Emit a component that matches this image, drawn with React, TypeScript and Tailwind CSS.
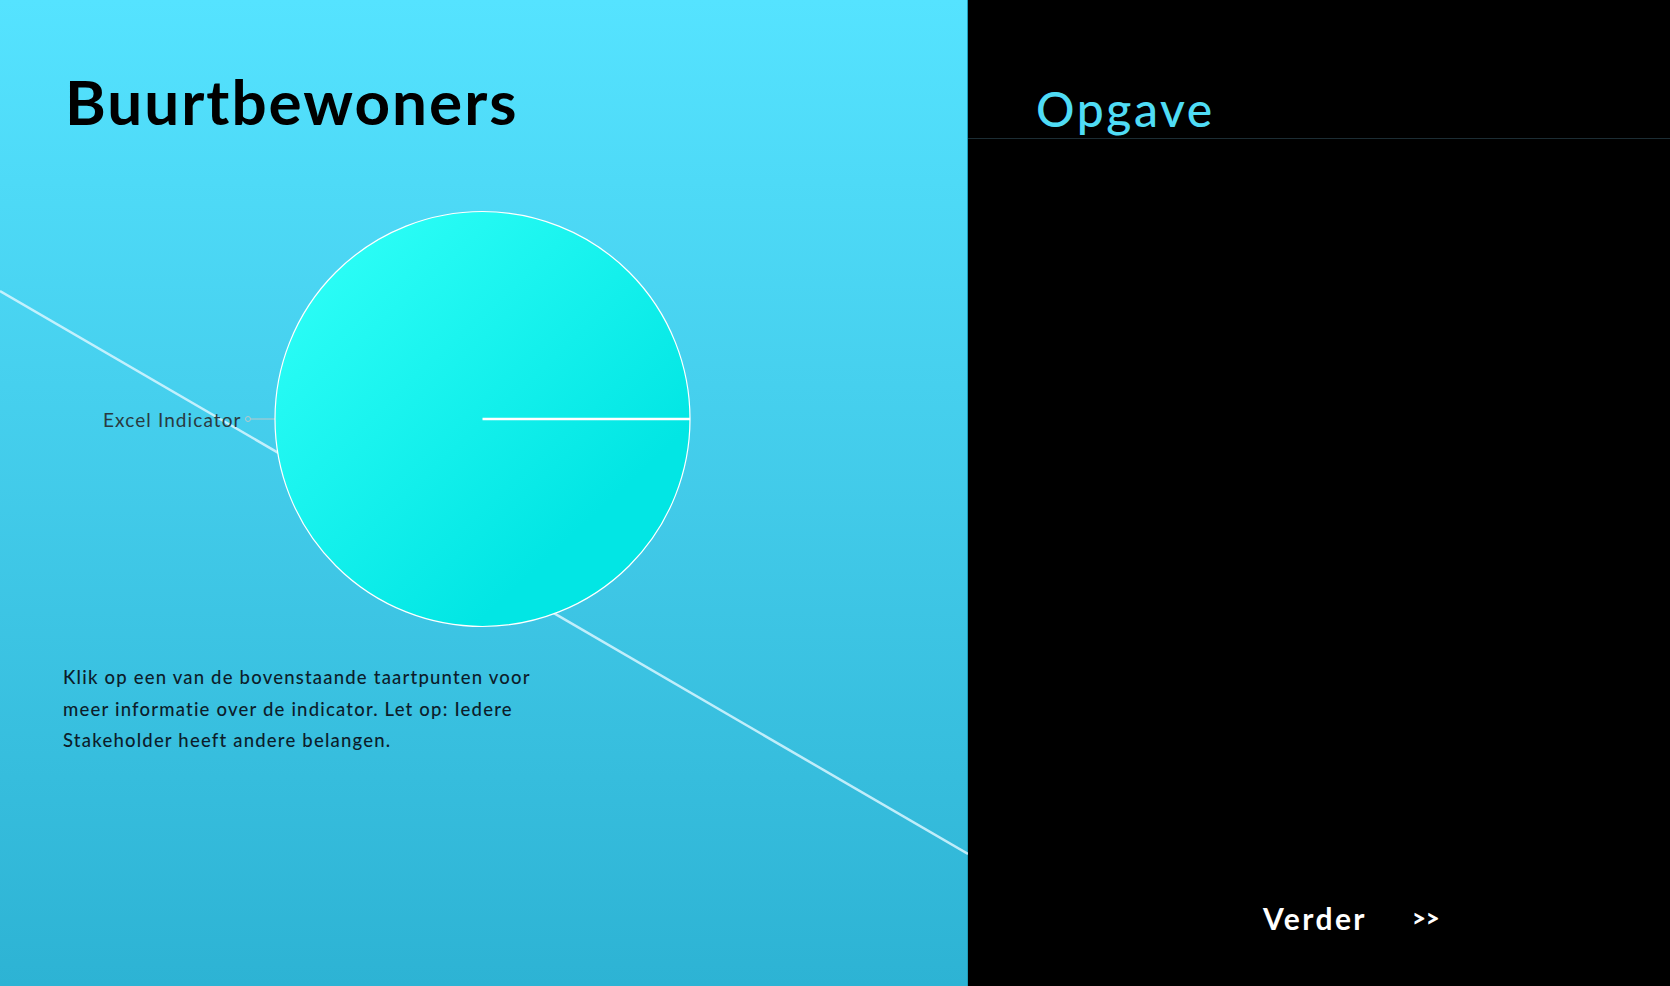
export default function App() {
	return (
		<div className="flex h-[986px] w-[1670px] overflow-hidden font-['Lato',sans-serif]">
			<div className="relative h-full w-[968px] shrink-0 border-r border-[#1f9cb8] bg-gradient-to-b from-[#55e3ff] to-[#2db3d4]">
				{/* diagonal line behind the chart */}
				<svg className="absolute inset-0" width="968" height="986">
					<line x1="0" y1="291" x2="968" y2="854" stroke="#d8f6ff" strokeOpacity="0.85" strokeWidth="2.5" />
				</svg>

				<div className="relative flex flex-col">
					<h1 className="ml-[65px] mt-[70px] text-[62px] font-bold leading-none tracking-[2px] text-black">
						Buurtbewoners
					</h1>

					<div className="mt-[77px] flex items-center">
						<span className="ml-[103px] w-[140px] whitespace-nowrap text-[19px] leading-none tracking-[1.1px] text-[#2a3a40]">
							Excel Indicator
						</span>
						<svg width="452" height="420" viewBox="0 0 452 420">
							<defs>
								<linearGradient id="pie" x1="0.15" y1="0.1" x2="0.75" y2="0.75">
									<stop offset="0" stopColor="#2bfdf6" />
									<stop offset="1" stopColor="#02e6e4" />
								</linearGradient>
							</defs>
							<circle cx="5" cy="210" r="2.5" fill="none" stroke="#b9c9cc" strokeWidth="1" />
							<line x1="7.5" y1="210" x2="32" y2="210" stroke="#b9c9cc" strokeWidth="1" />
							<circle cx="239.5" cy="210" r="207.5" fill="url(#pie)" stroke="#ffffff" strokeWidth="1.2" />
							<line x1="239.5" y1="210" x2="447" y2="210" stroke="#ffffff" strokeWidth="2.5" />
						</svg>
					</div>

					<p className="ml-[63px] mt-[33px] whitespace-nowrap text-[18.5px] font-medium leading-[31.5px] tracking-[1.2px] text-[#0c1d2b]">
						Klik op een van de bovenstaande taartpunten voor
						<br />
						meer informatie over de indicator. Let op: Iedere
						<br />
						Stakeholder heeft andere belangen.
					</p>
				</div>
			</div>

			<div className="flex h-full flex-1 flex-col bg-black">
				<div className="h-[139px] border-b border-[#1c2d34] pl-[68px] pt-[85px]">
					<h2 className="text-[48px] font-medium leading-none tracking-[2.6px] text-[#4fdcf5]">Opgave</h2>
				</div>

				<div className="mt-auto mb-[53px] flex items-center pl-[295px]">
					<span className="text-[30px] font-bold leading-none tracking-[2.4px] text-white">Verder</span>
					<span className="ml-[45px] text-[24px] font-black leading-none text-white">&gt;&gt;</span>
				</div>
			</div>
		</div>
	);
}
